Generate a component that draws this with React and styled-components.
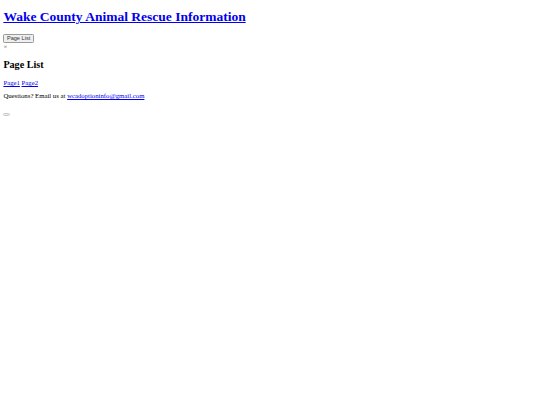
import styled, { createGlobalStyle } from 'styled-components';

// page is drawn at 540/1280 of its normal size
const GlobalStyle = createGlobalStyle`
    body {
        margin: 3.375px;
        font-family: "Liberation Serif", serif;
        font-size: 6.75px;
        color: #000;
        background: #fff;
    }
`

function App() {
    return (
        <>
            <GlobalStyle />
            <Title>
                <TitleLink href="#">Wake County Animal Rescue Information</TitleLink>
            </Title>
            <MenuBtn type='button'>Page List</MenuBtn>
            <CloseMark>×</CloseMark>
            <SubTitle>Page List</SubTitle>
            <PageLinks>
                <TextLink href="#">Page1</TextLink> <TextLink href="#">Page2</TextLink>
            </PageLinks>
            <Contact>
                Questions? Email us at <TextLink href="#">wcadoptioninfo@gmail.com</TextLink>
            </Contact>
            <BottomRow>
                <EmptyBtn type='button'></EmptyBtn>
            </BottomRow>
        </>
    )
}

const Title = styled.h1`
    font-size: 13.5px;
    font-weight: bold;
    margin: 6px 0 8.5px;
`
const TitleLink = styled.a`
    color: #0000ee;
`
const MenuBtn = styled.button`
    display: block;
    font-family: "Liberation Sans", Arial, sans-serif;
    font-size: 5.625px;
    padding: 0.42px 2.53px;
    color: #333;
    background: #efefef;
    border: 0.5px solid #9a9a9a;
    border-radius: 1.3px;
`
const CloseMark = styled.div`
    font-size: 6.75px;
    color: #444;
`
const SubTitle = styled.h2`
    font-size: 10.125px;
    font-weight: bold;
    margin: 9.3px 0 9.5px;
`
const PageLinks = styled.p`
    margin: 6.75px 0 5.8px;
`
const TextLink = styled.a`
    color: #0000ee;
`
const Contact = styled.p`
    margin: 5.8px 0 6.75px;
`
const BottomRow = styled.div`
    display: flex;
    padding-top: 7px;
`
const EmptyBtn = styled.button`
    width: 7px;
    height: 3px;
    padding: 0;
    background: #efefef;
    border: 1px solid #c6c6c6;
    border-radius: 1.5px;
`
export default App;
